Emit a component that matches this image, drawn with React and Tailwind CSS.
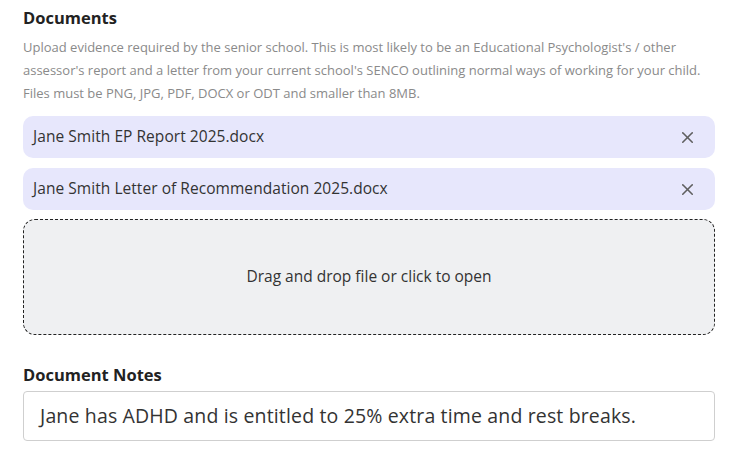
import React from 'react';
import { X } from 'lucide-react';

const files = [
  'Jane Smith EP Report 2025.docx',
  'Jane Smith Letter of Recommendation 2025.docx',
];

const App = () => {
  return (
    <div className="min-h-screen bg-white px-[23px] pt-[6px] font-['Open_Sans','Lato',sans-serif] text-[#333]">
      <div className="w-[692px]">
        <h2 className="text-[16.5px] font-bold leading-[24px] text-[#222]">Documents</h2>
        <p className="mt-[6px] text-[13px] leading-[23px] text-[#8a8a8a] whitespace-nowrap">
          Upload evidence required by the senior school. This is most likely to be an Educational Psychologist's / other
          <br />
          assessor's report and a letter from your current school's SENCO outlining normal ways of working for your child.
          <br />
          Files must be PNG, JPG, PDF, DOCX or ODT and smaller than 8MB.
        </p>

        <div className="mt-[11px] flex flex-col gap-[10px]">
          {files.map((f) => (
            <div key={f} className="flex h-[42px] items-center justify-between rounded-[10px] bg-[#e7e7fc] pl-[10px] pr-[18px]">
              <span className="text-[15.5px] tracking-[0.05px] text-[#333]">{f}</span>
              <X className="h-[19px] w-[19px] text-[#5f5f5f]" strokeWidth={2} />
            </div>
          ))}
        </div>

        <div className="mt-[9px] flex h-[116px] items-center justify-center rounded-[12px] border border-dashed border-[#222] bg-[#eff0f2]">
          <span className="text-[15.5px] text-[#333]">Drag and drop file or click to open</span>
        </div>

        <h3 className="mt-[29px] text-[16.5px] font-bold leading-[22px] text-[#222]">Document Notes</h3>
        <div className="mt-[5px] flex h-[50px] items-center rounded-[4px] border border-[#cfcfcf] bg-white px-[16px]">
          <span className="text-[19.5px] tracking-[0.15px] text-[#333]">Jane has ADHD and is entitled to 25% extra time and rest breaks.</span>
        </div>
      </div>
    </div>
  );
};

export default App;
